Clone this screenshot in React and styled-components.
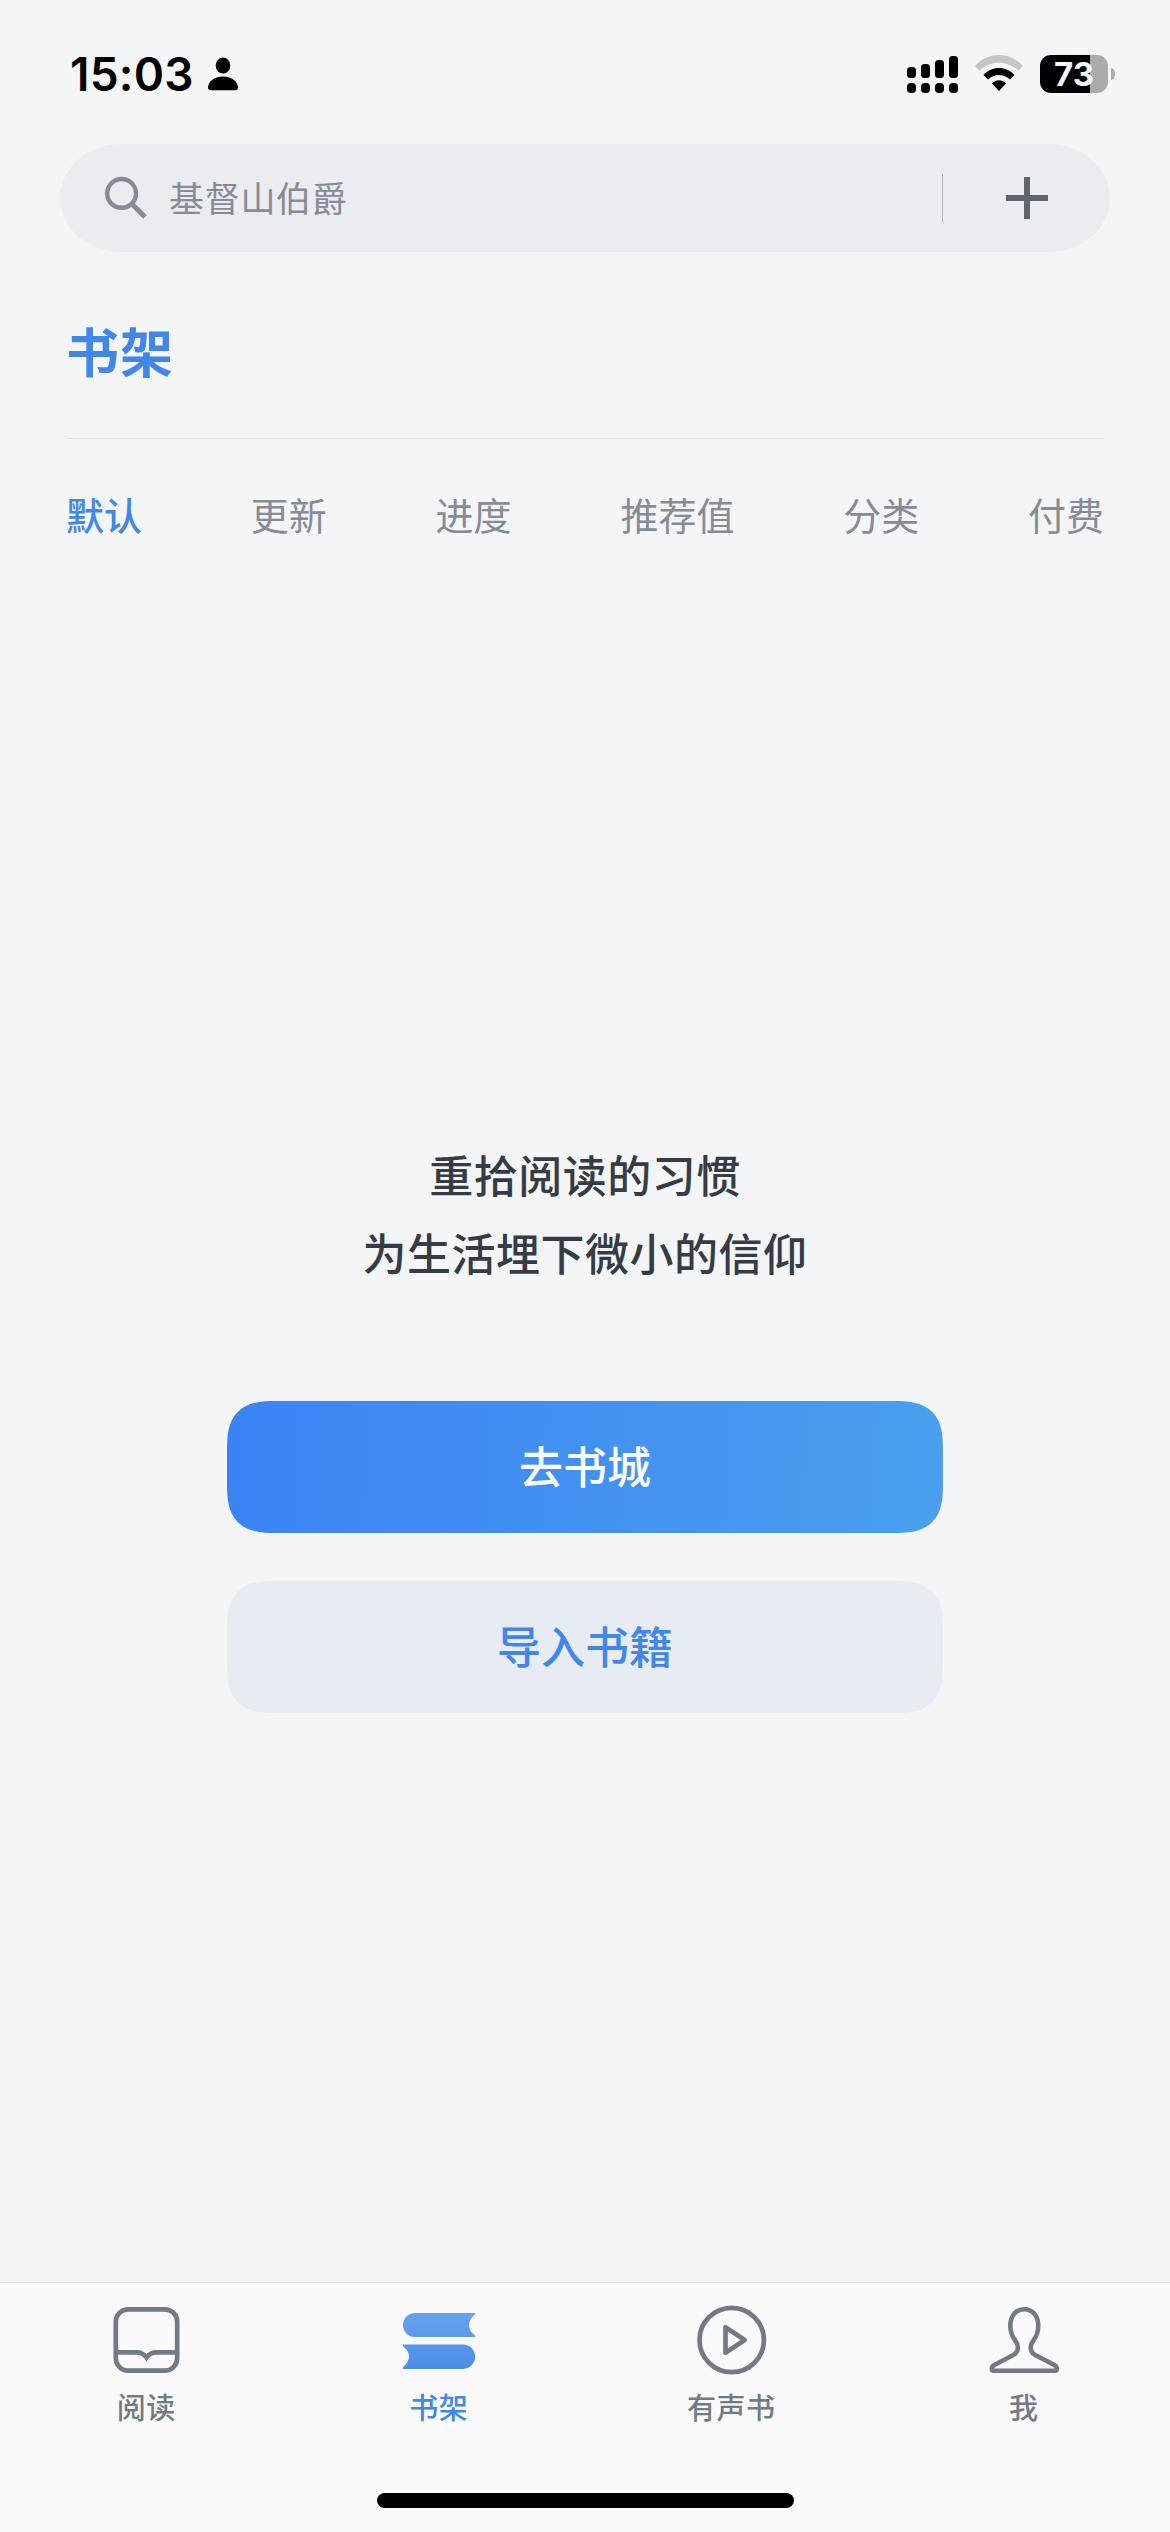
import React, { useState } from 'react';
import styled, { createGlobalStyle } from 'styled-components';

const GlobalStyle = createGlobalStyle`
  * {
    box-sizing: border-box;
  }

  body {
    margin: 0;
    background: #f4f5f7;
    font-family: "Noto Sans CJK SC", sans-serif;
  }

  button {
    font-family: inherit;
    border: none;
    padding: 0;
    margin: 0;
    background: none;
  }
`;

const Page = styled.div`
  width: 1170px;
  height: 2532px;
  display: flex;
  flex-direction: column;
  background: #f4f5f7;
  overflow: hidden;
`;

const StatusBar = styled.header`
  height: 144px;
  padding: 0 55px 0 70px;
  display: flex;
  justify-content: space-between;
`;

const StatusGroup = styled.div`
  height: 148px;
  display: flex;
  align-items: center;
`;

const Clock = styled.span`
  width: 138px;
  font-family: Inter, sans-serif;
  font-size: 46px;
  font-weight: 600;
  line-height: 56px;
  letter-spacing: 0.2px;
  color: #000;
`;

const Signal = styled.svg`
  margin-right: 17px;
`;

const Wifi = styled.svg`
  margin-right: 17px;
`;

const Battery = styled.div`
  width: 68px;
  height: 38px;
  border-radius: 11px;
  display: flex;
  align-items: center;
  justify-content: center;
  background: linear-gradient(90deg, #000 0 50px, #ababad 50px);
  font-family: Inter, sans-serif;
  font-size: 33px;
  font-weight: 700;
  line-height: 38px;
  color: #f4f5f7;
`;

const BatteryTip = styled.div`
  width: 4px;
  height: 12px;
  margin-left: 3px;
  border-radius: 0 4px 4px 0 / 0 6px 6px 0;
  background: #ababad;
`;

const SearchBar = styled.div`
  height: 108px;
  margin: 0 60px;
  padding-left: 44px;
  display: flex;
  align-items: center;
  border-radius: 62px / 54px;
  background: #ebecf0;
`;

const SearchText = styled.span`
  flex: 1;
  margin-left: 21px;
  padding-bottom: 2px;
  font-size: 35px;
  line-height: 54px;
  letter-spacing: 0.7px;
  color: #868b96;
`;

const SearchDivider = styled.div`
  width: 1px;
  height: 48px;
  background: #b0b2b7;
`;

const AddButton = styled.button`
  width: 167px;
  height: 108px;
  display: flex;
  align-items: center;
  justify-content: center;
`;

const Title = styled.h1`
  height: 187px;
  margin: 0 66px;
  padding-top: 58px;
  border-bottom: 1px solid #dddfe2;
  font-size: 53px;
  font-weight: 700;
  line-height: 80px;
  letter-spacing: 1px;
  color: #4186e8;
`;

const Filters = styled.nav`
  margin: 0 66px;
  padding-top: 47px;
  display: flex;
  justify-content: space-between;
`;

const Filter = styled.button`
  font-size: 38px;
  font-weight: ${(props) => (props.$active ? 500 : 400)};
  line-height: 56px;
  color: ${(props) => (props.$active ? '#4186e8' : '#868b96')};
`;

const Empty = styled.main`
  flex: 1;
  padding-top: 593px;
  display: flex;
  flex-direction: column;
  align-items: center;
`;

const Slogan = styled.p`
  margin: 0 0 110px;
  text-align: center;
  font-size: 44px;
  font-weight: 500;
  line-height: 78px;
  letter-spacing: 0.5px;
  color: #353c46;
`;

const ActionButton = styled.button`
  width: 716px;
  height: 132px;
  margin-bottom: 48px;
  padding-bottom: 4px;
  border-radius: 37px;
  font-size: 44px;
  font-weight: 500;
  line-height: 64px;
  color: ${(props) => (props.$primary ? '#fff' : '#4186e8')};
  background: ${(props) =>
    props.$primary ? 'linear-gradient(93deg, #3b83f5, #4a9fed)' : '#e7ecf3'};

  /* smoother corners where the browser can draw them */
  @supports (corner-shape: superellipse(1.5)) {
    border-radius: 50px;
    corner-shape: superellipse(1.5);
  }
`;

const TabBar = styled.nav`
  height: 250px;
  border-top: 1px solid #e2e3e5;
  display: flex;
  flex-direction: column;
  align-items: center;
  background: #fafafa;
`;

const Tabs = styled.div`
  width: 100%;
  height: 210px;
  display: grid;
  grid-template-columns: repeat(4, 1fr);
`;

const Tab = styled.button`
  padding-top: 21px;
  display: flex;
  flex-direction: column;
  align-items: center;
  font-size: 29px;
  font-weight: 500;
  line-height: 42px;
  letter-spacing: 0.5px;
  color: ${(props) => (props.$active ? '#4186e8' : '#727a85')};

  svg {
    margin-bottom: 9px;
  }
`;

const HomeIndicator = styled.div`
  width: 417px;
  height: 15px;
  border-radius: 8px;
  background: #000;
`;

const ReadIcon = () => (
  <svg width="72" height="72" viewBox="0 0 72 72" fill="none" stroke="#727a85" strokeWidth="4.7">
    <rect x="5.8" y="5.3" width="61.4" height="61.4" rx="12.5" />
    <path d="M5.500 48.3H27c4 0 6.5 1.5 9.5 5 3-3.5 5.5-5 9.5-5h21.500" />
    <path d="M33.500 51.500h6l-3 6.500z" fill="#727a85" stroke="none" />
  </svg>
);

const ShelfIcon = () => (
  <svg width="72" height="72" viewBox="0 0 72 72">
    <defs>
      <linearGradient id="shelf" x1="0" y1="0" x2="0" y2="1">
        <stop offset="0" stopColor="#67a3ec" />
        <stop offset="1" stopColor="#4c8de9" />
      </linearGradient>
    </defs>
    <path
      d="M12 9H72v1.5q-6 4.5-6 10.5t6 10.5V33H12A12 12 0 0 1 12 9zM0 40.500H60a12.2 12.2 0 0 1 0 24.400H0v-1.800q6-4.500 6-10.500T0 42.200z"
      fill="url(#shelf)"
    />
  </svg>
);

const AudioIcon = () => (
  <svg width="72" height="72" viewBox="0 0 72 72" fill="none" stroke="#727a85" strokeWidth="4.7">
    <circle cx="36.7" cy="36" r="32.2" />
    <path d="M30.500 23.300v25.400L49.700 36z" strokeLinejoin="round" />
  </svg>
);

const MeIcon = () => (
  <svg
    width="72"
    height="72"
    viewBox="0 0 72 72"
    fill="none"
    stroke="#727a85"
    strokeWidth="4.6"
    strokeLinejoin="round"
  >
    <path d="M36.300 5.200c-8.500 0-14 7-14 16.500 0 6 2 11 5 15 4.500 5.500 2.500 12-1.500 14L6.300 61c-1.800 1-2.500 2-2.500 3.500 0 1.500.7 2.300 2 2.300h61c1.300 0 2-.8 2-2.300 0-1.500-.7-2.500-2.500-3.500L46.800 50.700c-4-2-6-8.500-1.500-14 3-4 5-9 5-15 0-9.500-5.500-16.500-14-16.500z" />
  </svg>
);

const filters = ['默认', '更新', '进度', '推荐值', '分类', '付费'];

const tabs = [
  { label: '阅读', icon: ReadIcon },
  { label: '书架', icon: ShelfIcon },
  { label: '有声书', icon: AudioIcon },
  { label: '我', icon: MeIcon },
];

const App = () => {
  const [filter, setFilter] = useState('默认');
  const [tab, setTab] = useState('书架');

  return (
    <Page>
      <GlobalStyle />
      <StatusBar>
        <StatusGroup>
          <Clock>15:03</Clock>
          <svg width="30" height="34" viewBox="0 0 30 34">
            <ellipse cx="15" cy="8.5" rx="7.3" ry="8" />
            <path d="M3 33.300C1 33.300 0 32.300 0 30.500 0 25 6 19.500 15 19.500S30 25 30 30.500c0 1.800-1 2.800-3 2.800z" />
          </svg>
        </StatusGroup>
        <StatusGroup>
          <Signal width="51" height="38" viewBox="0 0 51 38">
            <rect x="0" y="12" width="9" height="11" rx="3.5" />
            <rect x="14" y="9" width="9" height="14" rx="3.5" />
            <rect x="28" y="5" width="9" height="18" rx="3.5" />
            <rect x="42" y="1" width="9" height="22" rx="3.5" />
            <rect x="0" y="28" width="9" height="10" rx="3.8" />
            <rect x="14" y="28" width="9" height="10" rx="3.8" />
            <rect x="28" y="28" width="9" height="10" rx="3.8" />
            <rect x="42" y="28" width="9" height="10" rx="3.8" />
          </Signal>
          <Wifi width="48" height="38" viewBox="0 0 48 38">
            <path d="M0 11C13-3.700 35-3.700 48 11l-4.500 4.700C32.500 5 15.500 5 4.500 15.700z" fill="#c5c6c9" />
            <path d="M8.500 20C17 10.700 31 10.700 39.500 20L35 24.600c-6.500-6-15.500-6-22 0z" />
            <path d="M17 28.500c4-4.300 10-4.300 14 0L24 36z" />
          </Wifi>
          <Battery>73</Battery>
          <BatteryTip />
        </StatusGroup>
      </StatusBar>

      <SearchBar>
        <svg width="44" height="44" viewBox="0 0 44 44" fill="none" stroke="#868b96">
          <circle cx="17.6" cy="17.4" r="14.4" strokeWidth="4.4" />
          <path d="M27.5 27.5L41 41" strokeWidth="5" />
        </svg>
        <SearchText>基督山伯爵</SearchText>
        <SearchDivider />
        <AddButton>
          <svg width="42" height="42" viewBox="0 0 42 42" fill="none" stroke="#5f6670" strokeWidth="6">
            <path d="M21 0v42M0 21h42" />
          </svg>
        </AddButton>
      </SearchBar>

      <Title>书架</Title>

      <Filters>
        {filters.map((name) => (
          <Filter key={name} $active={name === filter} onClick={() => setFilter(name)}>
            {name}
          </Filter>
        ))}
      </Filters>

      <Empty>
        <Slogan>
          重拾阅读的习惯
          <br />
          为生活埋下微小的信仰
        </Slogan>
        <ActionButton $primary>去书城</ActionButton>
        <ActionButton>导入书籍</ActionButton>
      </Empty>

      <TabBar>
        <Tabs>
          {tabs.map(({ label, icon: Icon }) => (
            <Tab key={label} $active={label === tab} onClick={() => setTab(label)}>
              <Icon />
              {label}
            </Tab>
          ))}
        </Tabs>
        <HomeIndicator />
      </TabBar>
    </Page>
  );
};

export default App;
